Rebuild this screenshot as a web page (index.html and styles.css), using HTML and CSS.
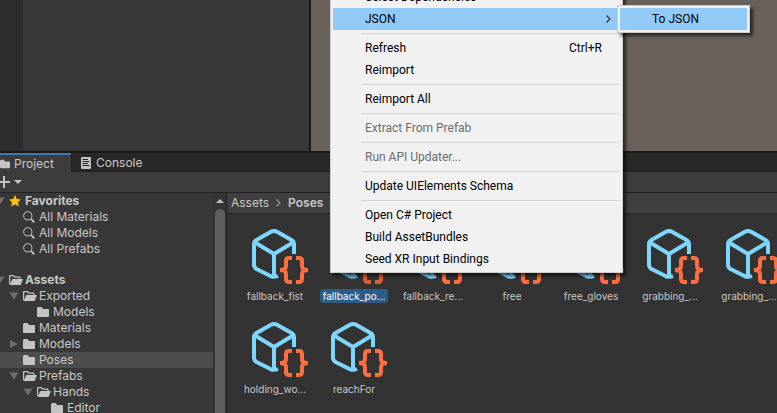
FILE: index.html
```html
<!DOCTYPE html>
<html lang="en">
<head>
<meta charset="utf-8">
<title>Project</title>
<link rel="stylesheet" href="styles.css">
</head>
<body>
<svg class="defs" aria-hidden="true">
  <symbol id="folder" viewBox="0 0 12 10"><path d="M0 1.5Q0 0 1.500 0H4.500L6 2H11Q12 2 12 3V9Q12 10 11 10H1Q0 10 0 9Z" fill="#c4c4c4"/></symbol>
  <symbol id="folder-open" viewBox="0 0 14 10"><path d="M.6 9V1.200Q.6.6 1.200.6H4.500L5.700 2.200H10.400Q11 2.200 11 2.800V4" fill="none" stroke="#c4c4c4" stroke-width="1.200"/><path d="M3.400 4H14L11.600 10H.6Z" fill="#c4c4c4"/></symbol>
  <symbol id="search" viewBox="0 0 12 12"><circle cx="4.800" cy="4.800" r="4.100" fill="none" stroke="#c4c4c4"/><path d="M8 8L11.300 11.300" stroke="#c4c4c4" stroke-width="1.800"/></symbol>
  <symbol id="down" viewBox="0 0 10 8"><path d="M.5.500H9.500L5 7.500Z" fill="#6e6e6e"/></symbol>
  <symbol id="right" viewBox="0 0 10 8"><path d="M1 0L9 4L1 8Z" fill="#6e6e6e"/></symbol>
  <symbol id="prefab" viewBox="0 0 56 56">
    <g fill="none" stroke="#7fd6fd" stroke-width="4" stroke-linejoin="round">
      <path d="M42 25V15.500Q42 12.500 39.500 11L25 2.800Q22 1.200 19 2.800L4.500 11Q2 12.500 2 15.500V35.500Q2 38.500 4.500 40L19 47.300Q22 48.500 26 47"/>
      <path d="M3 13.500L22 25L41 13.500M22 25V47"/>
    </g>
    <g fill="none" stroke="#ff6e40" stroke-width="4">
      <path d="M40 29H37Q34 29 34 32V37Q34 41 28 41Q34 41 34 45V50Q34 53 37 53H40"/>
      <path d="M44 29H47Q50 29 50 32V37Q50 41 56 41Q50 41 50 45V50Q50 53 47 53H44"/>
    </g>
  </symbol>
</svg>
<main class="editor">
  <section class="views">
    <div class="side"></div>
    <div class="panel"></div>
    <div class="scene"></div>
  </section>
  <section class="project">
    <div class="tabs">
      <button class="tab active"><svg class="i-folder"><use href="#folder"/></svg>Project</button>
      <button class="tab"><svg class="i-console" viewBox="0 0 10 12"><rect width="10" height="12" rx="1" fill="#c4c4c4"/><path d="M1.500 2.500H7M1.500 4.500H8.500M1.500 6.500H7M1.500 8.500H8.500" stroke="#282828"/></svg>Console</button>
    </div>
    <div class="toolbar">
      <button class="add" aria-label="Create"><svg class="i-add" viewBox="0 0 22 12"><path d="M4 0V12M-2 6H10" stroke="#c4c4c4" stroke-width="2"/><path d="M14 4H22L18 8Z" fill="#c4c4c4"/></svg></button>
    </div>
    <div class="split">
      <nav class="tree">
        <ul class="rows">
          <li class="row d0 bold"><svg class="arrow"><use href="#down"/></svg><svg class="icon" viewBox="0 0 12 12"><path d="M6 0L7.800 4L12 4.400L8.900 7.200L9.800 11.500L6 9.300L2.200 11.500L3.100 7.200L0 4.400L4.200 4Z" fill="#ffc107"/></svg>Favorites</li>
          <li class="row d1"><span class="arrow"></span><svg class="icon"><use href="#search"/></svg>All Materials</li>
          <li class="row d1"><span class="arrow"></span><svg class="icon"><use href="#search"/></svg>All Models</li>
          <li class="row d1"><span class="arrow"></span><svg class="icon"><use href="#search"/></svg>All Prefabs</li>
          <li class="gap"></li>
          <li class="row d0 bold"><svg class="arrow"><use href="#down"/></svg><svg class="icon open"><use href="#folder-open"/></svg>Assets</li>
          <li class="row d1"><svg class="arrow"><use href="#down"/></svg><svg class="icon open"><use href="#folder-open"/></svg>Exported</li>
          <li class="row d2"><span class="arrow"></span><svg class="icon"><use href="#folder"/></svg>Models</li>
          <li class="row d1"><span class="arrow"></span><svg class="icon"><use href="#folder"/></svg>Materials</li>
          <li class="row d1"><svg class="arrow"><use href="#right"/></svg><svg class="icon"><use href="#folder"/></svg>Models</li>
          <li class="row d1 selected"><span class="arrow"></span><svg class="icon"><use href="#folder"/></svg>Poses</li>
          <li class="row d1"><svg class="arrow"><use href="#down"/></svg><svg class="icon open"><use href="#folder-open"/></svg>Prefabs</li>
          <li class="row d2"><svg class="arrow"><use href="#down"/></svg><svg class="icon open"><use href="#folder-open"/></svg>Hands</li>
          <li class="row d3"><span class="arrow"></span><svg class="icon"><use href="#folder"/></svg>Editor</li>
        </ul>
        <div class="scroll"><svg class="up" viewBox="0 0 8 4"><path d="M0 4L4 0L8 4Z" fill="#c4c4c4"/></svg><div class="thumb"></div></div>
      </nav>
      <div class="content">
        <div class="crumbs"><span>Assets</span><svg class="chev" viewBox="0 0 5 8"><path d="M.5.500L4 4L.5 7.500" fill="none" stroke="#8c8c8c" stroke-width="1.500"/></svg><b>Poses</b><svg class="chev" viewBox="0 0 5 8"><path d="M.5.500L4 4L.5 7.500" fill="none" stroke="#8c8c8c" stroke-width="1.500"/></svg></div>
        <div class="grid">
          <figure class="asset"><svg class="prefab"><use href="#prefab"/></svg><figcaption>fallback_fist</figcaption></figure>
          <figure class="asset picked"><svg class="prefab"><use href="#prefab"/></svg><figcaption>fallback_po...</figcaption></figure>
          <figure class="asset"><svg class="prefab"><use href="#prefab"/></svg><figcaption>fallback_re...</figcaption></figure>
          <figure class="asset"><svg class="prefab"><use href="#prefab"/></svg><figcaption>free</figcaption></figure>
          <figure class="asset"><svg class="prefab"><use href="#prefab"/></svg><figcaption>free_gloves</figcaption></figure>
          <figure class="asset"><svg class="prefab"><use href="#prefab"/></svg><figcaption>grabbing_...</figcaption></figure>
          <figure class="asset"><svg class="prefab"><use href="#prefab"/></svg><figcaption>grabbing_...</figcaption></figure>
          <figure class="asset"><svg class="prefab"><use href="#prefab"/></svg><figcaption>holding_wo...</figcaption></figure>
          <figure class="asset"><svg class="prefab"><use href="#prefab"/></svg><figcaption>reachFor</figcaption></figure>
        </div>
      </div>
    </div>
  </section>
</main>
<div class="menu context">
  <button class="item">Select Dependencies</button>
  <button class="item hot">JSON<svg class="more" viewBox="0 0 5 8"><path d="M.5.500L4 4L.5 7.500" fill="none" stroke="#333" stroke-width="1.200"/></svg></button>
  <hr>
  <button class="item">Refresh<span class="key">Ctrl+R</span></button>
  <button class="item">Reimport</button>
  <hr>
  <button class="item">Reimport All</button>
  <hr>
  <button class="item" disabled>Extract From Prefab</button>
  <hr>
  <button class="item" disabled>Run API Updater...</button>
  <hr>
  <button class="item">Update UIElements Schema</button>
  <hr>
  <button class="item">Open C# Project</button>
  <button class="item">Build AssetBundles</button>
  <button class="item">Seed XR Input Bindings</button>
</div>
<div class="menu submenu"><button class="item hot">To JSON</button></div>
</body>
</html>
```
FILE: styles.css
```css
* { box-sizing: border-box; }
body {
  margin: 0;
  position: relative;
  height: 100vh;
  overflow: hidden;
  background: #383838;
  color: #c8c8c8;
  font: 12px/16px Inter, "Liberation Sans", sans-serif;
}
button { border: 0; padding: 0; background: none; color: inherit; font: inherit; text-align: left; }
svg { display: block; flex: none; }
.defs { position: absolute; width: 0; height: 0; }

.editor { display: flex; flex-direction: column; height: 100%; }
.views { display: flex; height: 151px; flex: none; }
.side { width: 23px; background: #2d2d2d; }
.panel { width: 288px; background: #383838; border-right: 2px solid #191919; }
.scene { flex: 1; background: #6a615b; }

.project { flex: 1; min-height: 0; display: flex; flex-direction: column; border-top: 2px solid #191919; }
.tabs { display: flex; height: 19px; flex: none; background: #282828; border-bottom: 1px solid #1e1e1e; }
.tab { display: flex; align-items: center; gap: 5px; height: 19px; padding-left: 9px; }
.tab.active { width: 71px; padding-left: 0; gap: 4px; background: #3c3c3c; border-top: 2px solid #3a79bb; }
.tab + .tab { border-left: 1px solid #1e1e1e; }
.i-folder { width: 10px; height: 10px; }
.i-console { width: 10px; height: 12px; }
.toolbar { display: flex; align-items: center; height: 21px; flex: none; background: #3c3c3c; border-bottom: 1px solid #232323; }
.i-add { width: 22px; height: 12px; }

.split { flex: 1; min-height: 0; display: flex; }
.tree { width: 227px; flex: none; display: flex; border-right: 1px solid #1f1f1f; }
.rows { flex: 1; margin: 0; padding: 0; list-style: none; overflow: hidden; }
.row { display: flex; align-items: center; height: 16px; }
.gap { height: 15px; }
.row.selected { background: #4d4d4d; }
.bold { font-weight: 700; }
.arrow { width: 10px; height: 8px; margin-right: 4px; }
.icon { width: 12px; height: 12px; margin-right: 4px; }
.icon.open { width: 14px; margin-right: 2px; }
.d0 { margin-left: -5px; }
.d1 { padding-left: 9px; }
.d2 { padding-left: 23px; }
.d3 { padding-left: 37px; }
.scroll { width: 13px; padding: 6px 1px 0; background: #353535; border-left: 1px solid #303030; display: flex; flex-direction: column; align-items: center; gap: 6px; }
.up { width: 8px; height: 4px; }
.thumb { width: 10px; flex: 1; border-radius: 5px 5px 0 0; background: #5f5f5f; }

.content { flex: 1; min-width: 0; background: #333; overflow: hidden; }
.crumbs { display: flex; align-items: center; gap: 7px; height: 21px; padding-left: 4px; background: #3f3f3f; border-bottom: 1px solid #242424; }
.crumbs b { font-weight: 600; }
.chev { width: 5px; height: 8px; }
.grid { display: grid; grid-template-columns: repeat(7, 68px); gap: 19px 11px; padding: 15px 0 0 14px; }
.asset { margin: 0; height: 74px; display: flex; flex-direction: column; align-items: center; justify-content: space-between; }
.prefab { width: 56px; height: 56px; margin-left: 10px; }
.asset figcaption { width: 68px; height: 14px; border-radius: 3px; font-size: 10px; line-height: 14px; text-align: center; white-space: nowrap; }
.picked figcaption { background: #2c5d87; color: #fff; }
.picked .prefab { filter: brightness(.85); }

.menu {
  position: absolute;
  padding: 2px;
  background: #f1f1f1;
  border: 1px solid #ccc;
  box-shadow: 3px 3px 3px rgba(0, 0, 0, .6);
  color: #000;
  font: 12px/22px Roboto, "Open Sans", sans-serif;
}
.context { left: 330px; top: -17px; width: 293px; }
.submenu { left: 617px; top: 5px; width: 133px; }
.item { display: flex; align-items: center; width: 100%; height: 22px; padding: 0 9px 0 32px; }
.item.hot { background: #91c9f7; }
.item:disabled { color: #6d6d6d; }
.key { margin-left: auto; padding-right: 9px; }
.more { width: 5px; height: 8px; margin-left: auto; }
.menu hr { height: 1px; margin: 3px 0 3px 28px; border: 0; background: #d4d4d4; }
```
